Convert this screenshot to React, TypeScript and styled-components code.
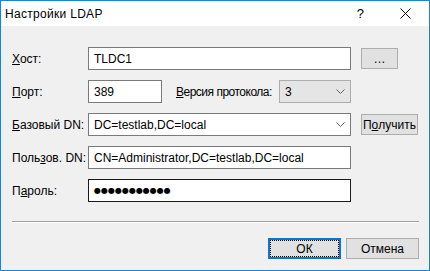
import styled, { createGlobalStyle } from "styled-components";

const GlobalStyle = createGlobalStyle`
  html, body {
    margin: 0;
    padding: 0;
    background: #ffffff;
  }
  body {
    font-family: "Liberation Sans", Arial, sans-serif;
    font-size: 12px;
    color: #000000;
  }
`;

const Chevron = () => (
  <svg width="9" height="6" viewBox="0 0 9 6">
    <path d="M0.5 0.5 L4.5 4.5 L8.5 0.5" fill="none" stroke="#606060" strokeWidth="1" />
  </svg>
);

const CloseIcon = () => (
  <svg width="11" height="11" viewBox="0 0 11 11">
    <path d="M0.5 0.5 L10.5 10.5 M10.5 0.5 L0.5 10.5" stroke="#000" strokeWidth="1" />
  </svg>
);

const App = () => {
  return (
    <>
      <GlobalStyle />
      <Window>
        <TitleBar>
          <Title>Настройки LDAP</Title>
          <TitleButtons>
            <HelpMark>?</HelpMark>
            <CloseIcon />
          </TitleButtons>
        </TitleBar>
        <Body>
          <Row>
            <Label>
              <u>Х</u>ост:
            </Label>
            <TextBox $width={263}>TLDC1</TextBox>
            <Button $width={37} $left={10}>…</Button>
          </Row>
          <Row>
            <Label>
              <u>П</u>орт:
            </Label>
            <TextBox $width={74}>389</TextBox>
            <InlineLabel>
              <u>В</u>ерсия протокола:
            </InlineLabel>
            <Combo $width={72} $disabled>
              <span>3</span>
              <Chevron />
            </Combo>
          </Row>
          <Row>
            <Label>
              <u>Б</u>азовый DN:
            </Label>
            <Combo $width={263}>
              <span>DC=testlab,DC=local</span>
              <Chevron />
            </Combo>
            <Button $width={57} $left={10}>
              П<u>о</u>лучить
            </Button>
          </Row>
          <Row>
            <Label>
              Поль<u>з</u>ов. DN:
            </Label>
            <TextBox $width={263}>CN=Administrator,DC=testlab,DC=local</TextBox>
          </Row>
          <Row>
            <Label>
              П<u>а</u>роль:
            </Label>
            <TextBox $width={263} $focused>
              <Dots>●●●●●●●●●●●</Dots>
            </TextBox>
          </Row>
          <Separator />
          <Footer>
            <FooterButton $default>
              <FocusRing>ОК</FocusRing>
            </FooterButton>
            <FooterButton>Отмена</FooterButton>
          </Footer>
        </Body>
      </Window>
    </>
  );
};

const Window = styled.div`
  width: 430px;
  height: 271px;
  box-sizing: border-box;
  border: 1px solid #1883d7;
  display: flex;
  flex-direction: column;
  background: #f0f0f0;
`;

const TitleBar = styled.div`
  height: 25px;
  background: #ffffff;
  display: flex;
  align-items: center;
  justify-content: space-between;
  padding: 0 18px 0 4px;
`;

const Title = styled.div`
  font-size: 12px;
  letter-spacing: 0.3px;
`;

const TitleButtons = styled.div`
  display: flex;
  align-items: center;
  gap: 36px;
`;

const HelpMark = styled.span`
  font-size: 13px;
`;

const Body = styled.div`
  flex: 1;
  display: flex;
  flex-direction: column;
  padding: 21px 10px 0 11px;
`;

const Row = styled.div`
  display: flex;
  align-items: center;
  height: 23px;
  margin-bottom: 10px;
`;

const Label = styled.div`
  width: 76px;
  flex-shrink: 0;
  white-space: nowrap;
`;

const InlineLabel = styled.div`
  width: 103px;
  margin-left: 14px;
  white-space: nowrap;
  letter-spacing: -0.5px;
`;

const TextBox = styled.div<{ $width: number; $focused?: boolean }>`
  width: ${({ $width }) => $width}px;
  height: 23px;
  box-sizing: border-box;
  border: 1px solid ${({ $focused }) => ($focused ? "#1a1a1a" : "#7a7a7a")};
  background: #ffffff;
  display: flex;
  align-items: center;
  padding: 0 5px;
  white-space: nowrap;
  overflow: hidden;
`;

const Dots = styled.span`
  font-family: "DejaVu Sans", sans-serif;
  font-size: 8px;
  letter-spacing: 0;
`;

const Combo = styled.div<{ $width: number; $disabled?: boolean }>`
  width: ${({ $width }) => $width}px;
  height: 23px;
  box-sizing: border-box;
  border: 1px solid ${({ $disabled }) => ($disabled ? "#adadad" : "#7a7a7a")};
  background: ${({ $disabled }) => ($disabled ? "#e5e5e5" : "#ffffff")};
  display: flex;
  align-items: center;
  justify-content: space-between;
  padding: 0 5px;
  white-space: nowrap;
`;

const Button = styled.div<{ $width: number; $left: number }>`
  width: ${({ $width }) => $width}px;
  margin-left: ${({ $left }) => $left}px;
  height: 21px;
  box-sizing: border-box;
  border: 1px solid #adadad;
  background: #e1e1e1;
  display: flex;
  align-items: center;
  justify-content: center;
  white-space: nowrap;
`;

const Separator = styled.div`
  margin-top: 9px;
  height: 1px;
  width: 407px;
  background: #a0a0a0;
  border-bottom: 1px solid #ffffff;
`;

const Footer = styled.div`
  display: flex;
  justify-content: flex-end;
  gap: 5px;
  margin-top: 15px;
  padding-right: 0;
`;

const FooterButton = styled.div<{ $default?: boolean }>`
  width: 73px;
  height: 21px;
  box-sizing: border-box;
  border: ${({ $default }) => ($default ? "2px solid #0078d7" : "1px solid #adadad")};
  background: #e1e1e1;
  display: flex;
  align-items: center;
  justify-content: center;
`;

const FocusRing = styled.div`
  width: 100%;
  height: 100%;
  box-sizing: border-box;
  border: 1px dotted #000;
  display: flex;
  align-items: center;
  justify-content: center;
`;

export default App;
